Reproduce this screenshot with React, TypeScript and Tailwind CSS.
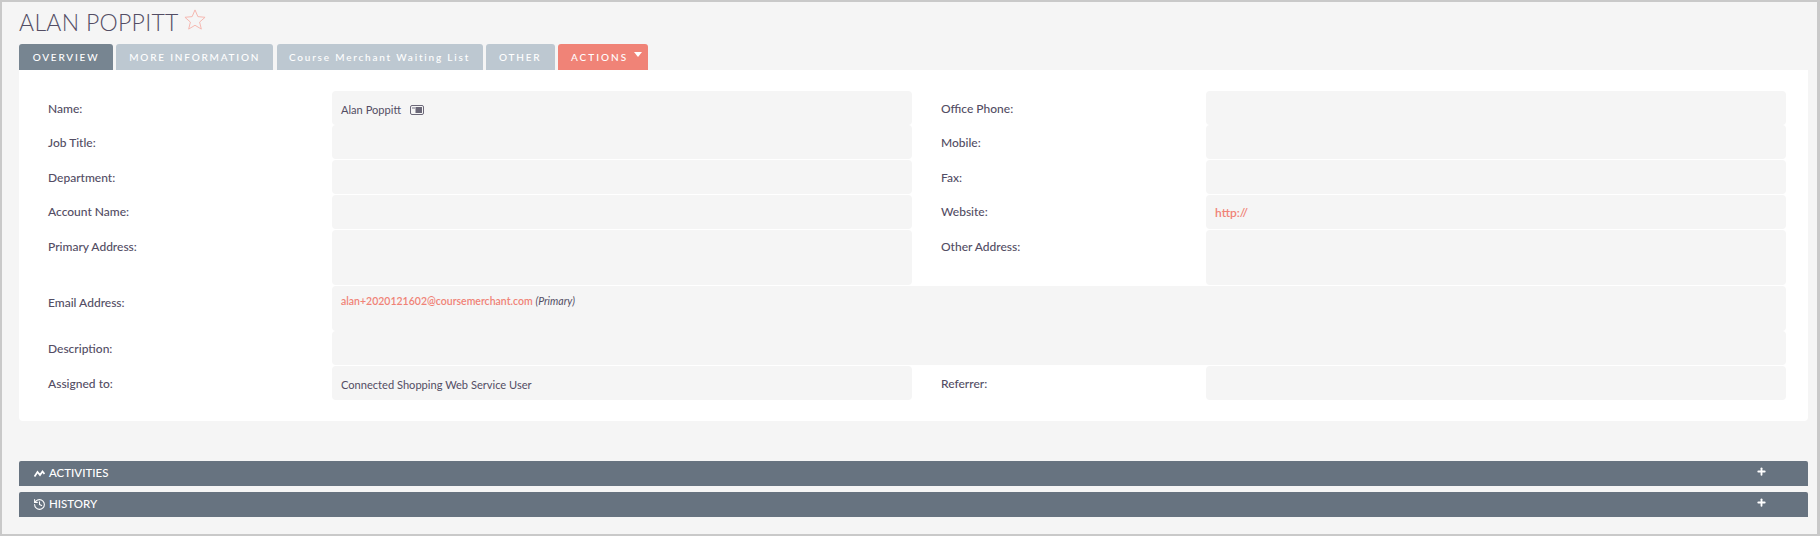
import React from 'react';
import { History, Plus } from 'lucide-react';

const tabs = [
  { label: 'OVERVIEW', cls: 'w-[94px] bg-[#778591]' },
  { label: 'MORE INFORMATION', cls: 'w-[157px] bg-[#bdc8d1]' },
  { label: 'Course Merchant Waiting List', cls: 'w-[206px] bg-[#bdc8d1]' },
  { label: 'OTHER', cls: 'w-[69px] bg-[#bdc8d1]' },
];

function Label({ children }: { children: React.ReactNode }) {
  return <div className="pl-[29px] pt-[9.5px] text-[12px] leading-[15px] font-medium text-[#534d64]">{children}</div>;
}

function Value({ children, span }: { children?: React.ReactNode; span?: boolean }) {
  return (
    <div
      className={`${span ? 'col-span-3' : ''} rounded-[4px] bg-[#f5f5f5] pl-[9px] pt-[10.5px] text-[11.1px] leading-[15px] text-[#534d64]`}
    >
      {children}
    </div>
  );
}

function CardIcon() {
  return (
    <svg width="14" height="10" viewBox="0 0 14 10" className="ml-[9px] inline-block align-[-1px]">
      <rect x="0.5" y="0.5" width="13" height="9" rx="1.5" fill="#f5f5f5" stroke="#6b6878" />
      <rect x="2" y="2" width="3" height="2" fill="#b5b3bd" />
      <rect x="5.5" y="2" width="6.5" height="6" fill="#6b6878" />
    </svg>
  );
}

function Bar({ title, icon }: { title: string; icon: React.ReactNode }) {
  return (
    <div className="flex h-[25px] items-center rounded-t-[2px] bg-[#677380] pl-[14px] pr-[41px] text-white">
      <span className="flex w-[13px] justify-center">{icon}</span>
      <span className="ml-[3px] -mt-[1px] text-[11.5px] font-medium leading-none">{title}</span>
      <Plus size={11} strokeWidth={4} className="ml-auto -mt-[4px]" />
    </div>
  );
}

export default function App() {
  return (
    <div className="h-[536px] w-[1820px] border-b-[2px] border-l-[2px] border-r-[3px] border-t-[2px] border-[#c9c9c9] bg-[#f5f5f5] font-['Lato',sans-serif]">
      <div className="ml-[17px] mr-[9px]">
        <div className="flex h-[42px] items-start pt-[7px]">
          <h1 className="text-[23px] font-light leading-[26px] tracking-[0.3px] text-[#534d64]">ALAN POPPITT</h1>
          <svg width="24" height="23" viewBox="0 0 24 24" fill="none" stroke="#f5b5ae" strokeWidth="1" className="ml-[4px] -mt-[1px]">
            <path d="M12 2l3 7 7.500.7-5.700 5 1.800 7.300L12 18l-6.600 4 1.800-7.300-5.700-5L9 9z" />
          </svg>
        </div>

        <div className="flex gap-[3.25px]">
          {tabs.map((t) => (
            <div
              key={t.label}
              className={`${t.cls} flex h-[26px] items-center justify-center rounded-t-[3px] text-[10px] font-medium tracking-[1.8px] text-white`}
            >
              {t.label}
            </div>
          ))}
          <div className="flex h-[26px] w-[90px] items-center rounded-t-[3px] bg-[#f08377] pl-[13px] text-[10px] font-medium tracking-[2px] text-white">
            ACTIONS
            <span className="mb-[6px] ml-[6px] h-0 w-0 border-x-[4.5px] border-t-[5px] border-x-transparent border-t-white" />
          </div>
        </div>

        <div className="rounded-b-[4px] bg-white pb-[20.5px] pr-[22px] pt-[21px]">
          <div className="grid grid-cols-[313px_580px_294px_580px] grid-rows-[33.5px_34px_34px_34px_55.25px_45px_34px_34px] gap-y-[0.75px]">
            <Label>Name:</Label>
            <Value>
              Alan Poppitt
              <CardIcon />
            </Value>
            <Label>Office Phone:</Label>
            <Value />

            <Label>Job Title:</Label>
            <Value />
            <Label>Mobile:</Label>
            <Value />

            <Label>Department:</Label>
            <Value />
            <Label>Fax:</Label>
            <Value />

            <Label>Account Name:</Label>
            <Value />
            <Label>Website:</Label>
            <Value>
              <span className="text-[12px] font-semibold text-[#f08377]">http://</span>
            </Value>

            <Label>Primary Address:</Label>
            <Value />
            <Label>Other Address:</Label>
            <Value />

            <Label>Email Address:</Label>
            <Value span>
              <div className="-mt-[3.5px]">
                <span className="text-[10.5px] font-semibold text-[#f08377]">alan+2020121602@coursemerchant.com</span>{' '}
                <span className="text-[10.5px] italic">(Primary)</span>
              </div>
            </Value>

            <Label>Description:</Label>
            <Value span />

            <Label>Assigned to:</Label>
            <Value>Connected Shopping Web Service User</Value>
            <Label>Referrer:</Label>
            <Value />
          </div>
        </div>

        <div className="mt-[40px] flex flex-col gap-[6px]">
          <Bar
            title="ACTIVITIES"
            icon={
              <svg width="11" height="7" viewBox="0 0 11 7" fill="none" stroke="white" strokeWidth="1.800">
                <path d="M0.500 6.500l3-4.500 2.500 3L8.500 1.500 10.500 4" />
              </svg>
            }
          />
          <Bar title="HISTORY" icon={<History size={13} strokeWidth={2} />} />
        </div>
      </div>
    </div>
  );
}
